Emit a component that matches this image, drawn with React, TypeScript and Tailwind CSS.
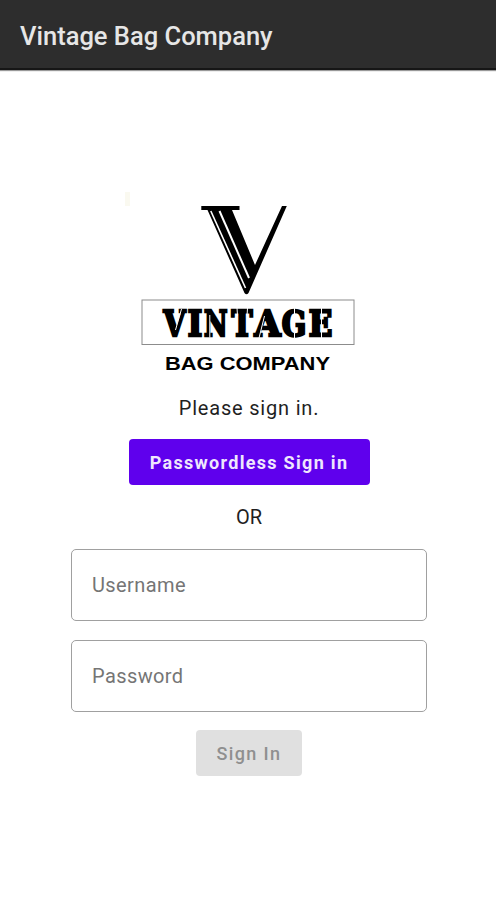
import React, { useState } from "react";

type FieldProps = {
  label: string;
  type: "text" | "password";
  value: string;
  onChange: (value: string) => void;
};

// Serif wordmark, every letter is squeezed to its own width
const WORDMARK = [
  { letter: "V", x: 163.5, width: 22 },
  { letter: "I", x: 187.7, width: 14.5 },
  { letter: "N", x: 204, width: 23.5 },
  { letter: "T", x: 231.5, width: 21 },
  { letter: "A", x: 254.5, width: 26 },
  { letter: "G", x: 281.7, width: 24.5 },
  { letter: "E", x: 308.8, width: 23.5 },
];

function Logo() {
  return (
    <svg width={248} height={190} viewBox="120 188 248 190" role="img" aria-label="Vintage Bag Company">
      <rect x={125} y={192} width={5} height={14} fill="#faf9f0" />

      {/* Engraved V */}
      <path d="M201.3 206H239.5V210H232L255 265L282 206H286.8L248.5 293Q246.5 295.5 244.5 293L207.5 210H201.3Z" fill="#000" />
      <path d="M210.8 211L245.5 288" stroke="#fff" strokeWidth={1.6} />
      <path d="M219.5 211L249 278" stroke="#fff" strokeWidth={2} />

      {/* Framed name */}
      <rect x={142} y={300} width={212} height={44.5} fill="#fff" stroke="#8c8c8c" />
      {WORDMARK.map(({ letter, x, width }) => (
        <text
          key={letter}
          x={x}
          y={335.6}
          fontSize={36}
          fontWeight={700}
          stroke="#000"
          strokeWidth={2.4}
          textLength={width}
          lengthAdjust="spacingAndGlyphs"
          className="font-['DejaVu_Serif_Condensed','DejaVu_Serif',serif]"
        >
          {letter}
        </text>
      ))}
      {/* Stencil cuts */}
      <path
        d="M181.5 309L175.5 330M209.8 315V337.5M237 308L237.500 316M247.500 308L247 316M264.5 316L259 338M294.500 307V338M321.500 307V338"
        stroke="#fff"
        strokeWidth={1}
        fill="none"
      />

      <text
        x={165}
        y={369.5}
        fontSize={17.5}
        fontWeight={700}
        textLength={165}
        lengthAdjust="spacingAndGlyphs"
        className="font-['Liberation_Sans',sans-serif]"
      >
        BAG COMPANY
      </text>
    </svg>
  );
}

function OutlinedField({ label, type, value, onChange }: FieldProps) {
  return (
    <input
      type={type}
      aria-label={label}
      placeholder={label}
      value={value}
      onChange={(event) => onChange(event.target.value)}
      className="h-[72px] w-[356px] rounded-[5px] border border-[#a0a0a0] bg-white px-5 text-[20px] tracking-[0.4px] text-[#222] outline-none placeholder:text-[#757575] focus:border-[#5f00ed]"
    />
  );
}

export default function App() {
  const [username, setUsername] = useState("");
  const [password, setPassword] = useState("");

  const canSignIn = username !== "" && password !== "";

  return (
    <div className="flex h-[900px] w-[496px] flex-col overflow-hidden bg-white font-['Roboto',sans-serif]">
      <header className="flex h-[70px] shrink-0 items-center border-b-2 border-[#161616] bg-[#2d2d2d] px-5 pt-1 shadow-[0_1px_1px_rgba(0,0,0,0.4)]">
        <h1 className="text-[25.5px] font-medium text-[#e6e6e6]">Vintage Bag Company</h1>
      </header>

      <main className="flex flex-col items-center pt-[118px] pl-[2px]">
        <div className="pr-[10px]">
          <Logo />
        </div>
        <p className="mt-[15px] text-[20px] leading-[30px] tracking-[0.8px] text-[#1f1f1f]">Please sign in.</p>
        <button className="mt-4 h-[46px] w-[241px] rounded-[4px] bg-[#5f00ed] text-[18px] font-bold tracking-[1.3px] text-[#efe6fd]">
          Passwordless Sign in
        </button>
        <p className="mt-[17px] text-[20px] leading-[30px] text-[#1f1f1f]">OR</p>
        <form className="mt-[17px] flex flex-col items-center" onSubmit={(event) => event.preventDefault()}>
          <OutlinedField label="Username" type="text" value={username} onChange={setUsername} />
          <div className="h-[19px]" />
          <OutlinedField label="Password" type="password" value={password} onChange={setPassword} />
          <button
            disabled={!canSignIn}
            className="mt-[18px] h-[46px] w-[106px] rounded-[4px] bg-[#5f00ed] text-[18px] font-medium tracking-[1.4px] text-white disabled:bg-[#e0e0e0] disabled:text-[#8f8f8f]"
          >
            Sign In
          </button>
        </form>
      </main>
    </div>
  );
}
